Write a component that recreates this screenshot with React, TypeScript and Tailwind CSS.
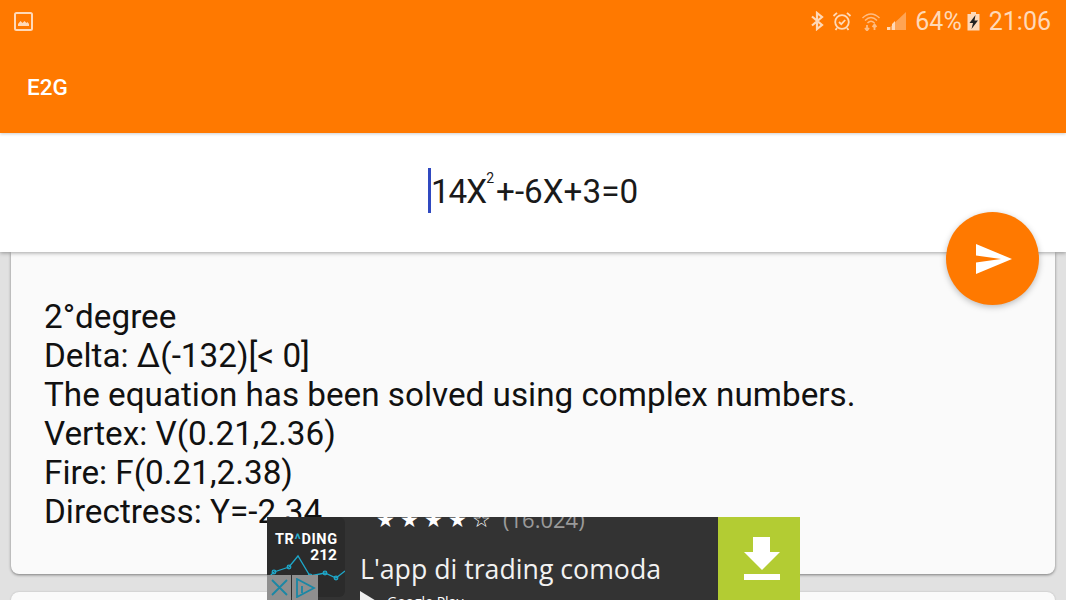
const lines = [
  '2°degree',
  'Delta: Δ(-132)[< 0]',
  'The equation has been solved using complex numbers.',
  'Vertex: V(0.21,2.36)',
  'Fire: F(0.21,2.38)',
  'Directress: Y=-2.34',
]

function StatusBar() {
  return (
    <div className="h-[42px] flex items-center justify-between pl-[14px] pr-[15px] text-[#ffd9b8]">
      <svg width="19" height="19" viewBox="0 0 19 19" fill="none">
        <rect x="1" y="1" width="17" height="17" rx="1.5" stroke="currentColor" strokeWidth="2" />
        <path d="M4 14 L4 12 L6.5 9 L8.5 11 L10.5 9 L12.5 11 L13.5 10 L15 12 L15 14 Z" fill="currentColor" />
      </svg>
      <div className="flex items-center">
        {/* bluetooth */}
        <svg width="14" height="20" viewBox="0 0 14 20" fill="none" stroke="currentColor" strokeWidth="2.2" className="mr-[8px]">
          <path d="M2 5.5 L12 14 L7 18 L7 2 L12 6 L2 14.5" />
        </svg>
        {/* alarm */}
        <svg width="20" height="20" viewBox="0 0 20 20" fill="none" stroke="currentColor" strokeWidth="1.8" className="mr-[9px]">
          <circle cx="10" cy="11" r="6.8" />
          <path d="M7 11 L9.3 13.2 L13.2 9" />
          <path d="M1.5 5 L5 1.8 M18.5 5 L15 1.8 M5 17 L3.5 19 M15 17 L16.5 19" />
        </svg>
        {/* wifi */}
        <svg width="20" height="20" viewBox="0 0 20 20" fill="none" stroke="currentColor" strokeWidth="1.5" className="opacity-70 mr-[5px]">
          <path d="M1.5 7 Q10 -1 18.5 7 M4 9.5 Q10 3.5 16 9.5 M6.5 12 Q10 8.5 13.5 12" />
          <path d="M6 14 L6 19 M4 17 L6 19.5 L8 17 M13.5 19 L13.5 14 M11.5 16 L13.5 13.5 L15.5 16" strokeWidth="1.8" />
        </svg>
        {/* signal */}
        <svg width="21" height="20" viewBox="0 0 21 20" className="mr-[8px]">
          <path d="M20 1 L20 19 L1 19 Z" fill="currentColor" opacity="0.45" />
          <path d="M1 19 L1 16 L4 16 L4 19 Z M6 19 L6 13 L9 10 L9 19 Z" fill="currentColor" />
        </svg>
        <span className="text-[25px] leading-none mr-[5px]">64%</span>
        {/* battery */}
        <svg width="13" height="20" viewBox="0 0 13 20" className="mr-[9px]">
          <path d="M4 1 H9 V3 H12.5 V19.5 H0.5 V3 H4 Z" fill="currentColor" />
          <path d="M8.5 4 L2.5 12 H6 L4.5 18 L11 9.5 H7.5 Z" fill="#222" />
        </svg>
        <span className="text-[25px] leading-none">21:06</span>
      </div>
    </div>
  )
}

function AdBanner() {
  return (
    <div className="absolute z-30 left-[267px] top-[517px] w-[533px] h-[83px] bg-[#333] flex overflow-hidden font-['Open_Sans',sans-serif]">
      <div className="w-[78px] h-[80px] bg-[#2b2b2b] rounded-[6px] shrink-0 flex flex-col pt-[14px] px-[8px] font-['Roboto',sans-serif] text-white font-bold">
        <div className="text-[14.5px] leading-[18px] tracking-[0.6px] whitespace-nowrap">
          TR<span className="text-[#29a9c9]">^</span>DING
        </div>
        <div className="self-end -mt-[3px] text-[15.5px] leading-[18px]">212</div>
        <svg width="78" height="50" viewBox="0 0 78 50" className="-mx-[8px] -mt-[17px] shrink-0" fill="none" stroke="#1ea7c9" strokeWidth="1.3">
          <path d="M0 32 L7 25 L22 20 L31 9 L43 29 L58 26 L69 31 L78 24" />
          <circle cx="7" cy="25" r="1.8" />
          <circle cx="22" cy="20" r="1.8" />
          <circle cx="43" cy="29" r="1.8" />
          <circle cx="58" cy="26" r="1.8" />
          <circle cx="69" cy="31" r="1.8" />
        </svg>
      </div>
      <div className="flex-1 flex flex-col pl-[15px] -mt-[8px] text-white whitespace-nowrap">
        <div className="ml-[16px] flex items-center gap-[7px] h-[20px] shrink-0">
          <span className="text-[21px] leading-[20px] tracking-[5px]">★★★★☆</span>
          <span className="text-[22px] leading-[20px] text-[#9a9a9a]">(16.024)</span>
        </div>
        <div className="mt-[23px] text-[26.7px] leading-[34px] text-[#f2f2f2] shrink-0">L'app di trading comoda</div>
        <div className="mt-[5px] flex items-start gap-[9px] shrink-0">
          <svg width="18" height="20" viewBox="0 0 18 20"><path d="M0 0 L18 11 L0 20 Z" fill="#eee" /></svg>
          <span className="text-[14px] leading-[18px] pt-[2px]">Google Play</span>
        </div>
      </div>
      <div className="w-[82px] bg-[#b3cc33] shrink-0 flex pl-[26px] pt-[20px]">
        <svg width="36" height="44" viewBox="0 0 36 44" fill="#fff">
          <path d="M9 0 H26 V15 H36 L18 33 L0 15 H9 Z" />
          <rect x="0" y="37" width="36" height="6" />
        </svg>
      </div>
    </div>
  )
}

export default function App() {
  return (
    <div className="relative w-[1066px] h-[600px] overflow-hidden bg-[#e1e1e1] font-['Roboto',sans-serif]">
      <header className="relative z-20 h-[133px] bg-[#ff7900] shadow-[0_1px_3px_rgba(0,0,0,0.2)]">
        <StatusBar />
        <h1 className="pl-[27px] pt-[31px] text-[22.5px] leading-[28px] font-medium text-white">E2G</h1>
      </header>

      <div className="h-[119px] bg-white shadow-[0_1px_4px_rgba(0,0,0,0.35)] relative z-10 flex items-center justify-center pb-[2px] text-[33.25px] text-[#1a1a1a]">
        <span className="w-[3px] h-[45px] -mt-[2px] bg-[#3049c0]" />
        <span className="leading-[44px] whitespace-nowrap">
          <span className="tracking-[-1px]">14X</span>
          <sup className="text-[14px] leading-none align-[13px] mr-[2px]">2</sup>+-6X+3=0
        </span>
      </div>

      <main className="px-[11px]">
        <section className="h-[322px] bg-[#fafafa] rounded-b-[8px] shadow-[0_1px_3px_rgba(0,0,0,0.45)] pl-[33px] pt-[45px] text-[33.25px] leading-[39px] text-[#111]">
          {lines.map(l => <div key={l}>{l}</div>)}
        </section>
        <section className="h-[40px] mt-[18px] bg-[#fafafa] rounded-t-[8px] shadow-[0_0_2px_rgba(0,0,0,0.2)]" />
      </main>

      <button type="button" className="absolute z-20 left-[946px] top-[212px] w-[93px] h-[93px] rounded-full bg-[#ff7900] shadow-[0_2px_6px_rgba(0,0,0,0.25)] flex items-center justify-center pl-[2px]">
        <svg width="36" height="30" viewBox="0 0 36 30">
          <path d="M0 0 L36 15 L0 30 L0 18.5 L25 15 L0 11.5 Z" fill="#fff" />
        </svg>
      </button>

      <AdBanner />

      <div className="absolute z-40 left-[267px] top-[575px] h-[25px] flex gap-[1px]">
        <div className="w-[24px] bg-[#8f8f8f] flex items-center justify-center">
          <svg width="17" height="17" viewBox="0 0 17 17" stroke="#1a87a5" strokeWidth="1.8"><path d="M1 1 L16 16 M16 1 L1 16" /></svg>
        </div>
        <div className="w-[26px] bg-[#8f8f8f] flex items-center justify-center">
          <svg width="22" height="20" viewBox="0 0 22 20" fill="none" stroke="#1a87a5" strokeWidth="1.8"><path d="M3 1 L20 10 L3 19 Z" /><path d="M8 8 L8 15" /></svg>
        </div>
      </div>
    </div>
  )
}
